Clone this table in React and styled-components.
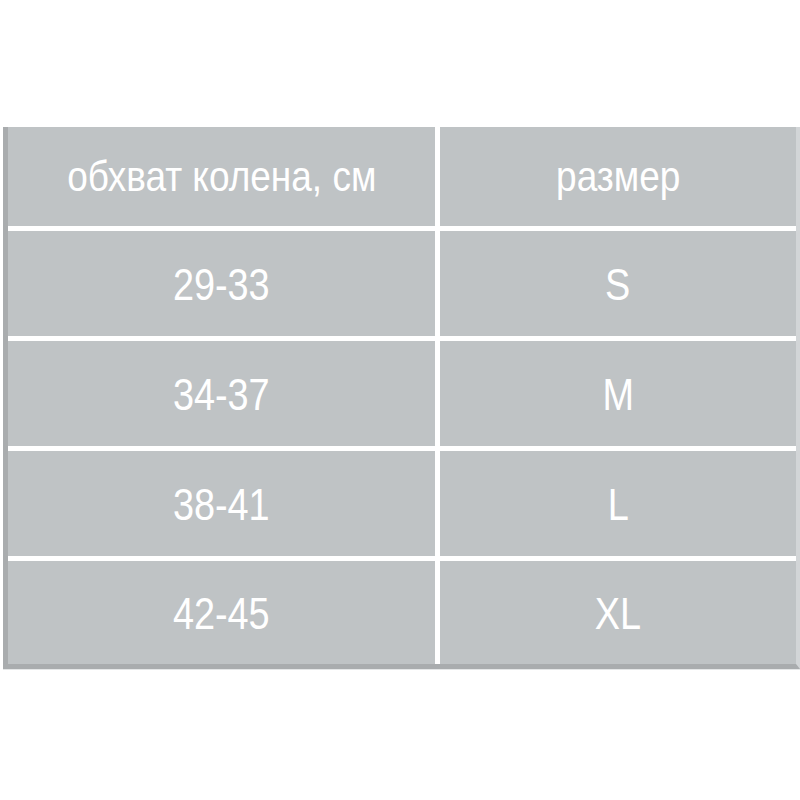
import React from 'react'
import styled, { createGlobalStyle } from 'styled-components'

const Global = createGlobalStyle`
	html, body {
		margin: 0;
		padding: 0;
		background: #fff;
	}
`

const Page = styled.div`
	width: 800px;
	height: 800px;
	padding: 127px 0 0 3px;
	box-sizing: border-box;
	background: #fff;
`

const Table = styled.div`
	display: grid;
	grid-template-columns: 427px 356px;
	grid-template-rows: 99px 105px 105px 105px 103px;
	gap: 5px;
	background: #fff;
	border-left: 5px solid #a9acae;
	border-bottom: 5px solid #a9acae;
	border-right: 4px solid #d2d5d7;
	box-shadow: 0 1px 0 #e4e6e7;
	width: max-content;
`

const Cell = styled.div`
	display: flex;
	align-items: center;
	justify-content: center;
	background: #bfc3c5;
	color: #fff;
	font-family: "Liberation Sans", Arial, sans-serif;
	font-size: ${p => (p.$head ? '43px' : '44px')};
	padding-top: ${p => (p.$head ? '0' : '2px')};
	box-sizing: border-box;
`

/* the source uses a condensed face; squeeze the regular one */
const Narrow = styled.span`
	display: inline-block;
	white-space: nowrap;
	transform: scaleX(${p => p.$k || 0.86});
`

const rows = [
	['29-33', 'S'],
	['34-37', 'M'],
	['38-41', 'L'],
	['42-45', 'XL'],
]

const App = () => {
	return (
		<Page>
			<Global />
			<Table>
				<Cell $head><Narrow $k={0.86}>обхват колена, см</Narrow></Cell>
				<Cell $head><Narrow $k={0.86}>размер</Narrow></Cell>
				{rows.map(([range, size]) => (
					<React.Fragment key={range}>
						<Cell><Narrow>{range}</Narrow></Cell>
						<Cell><Narrow>{size}</Narrow></Cell>
					</React.Fragment>
				))}
			</Table>
		</Page>
	)
}

export default App
